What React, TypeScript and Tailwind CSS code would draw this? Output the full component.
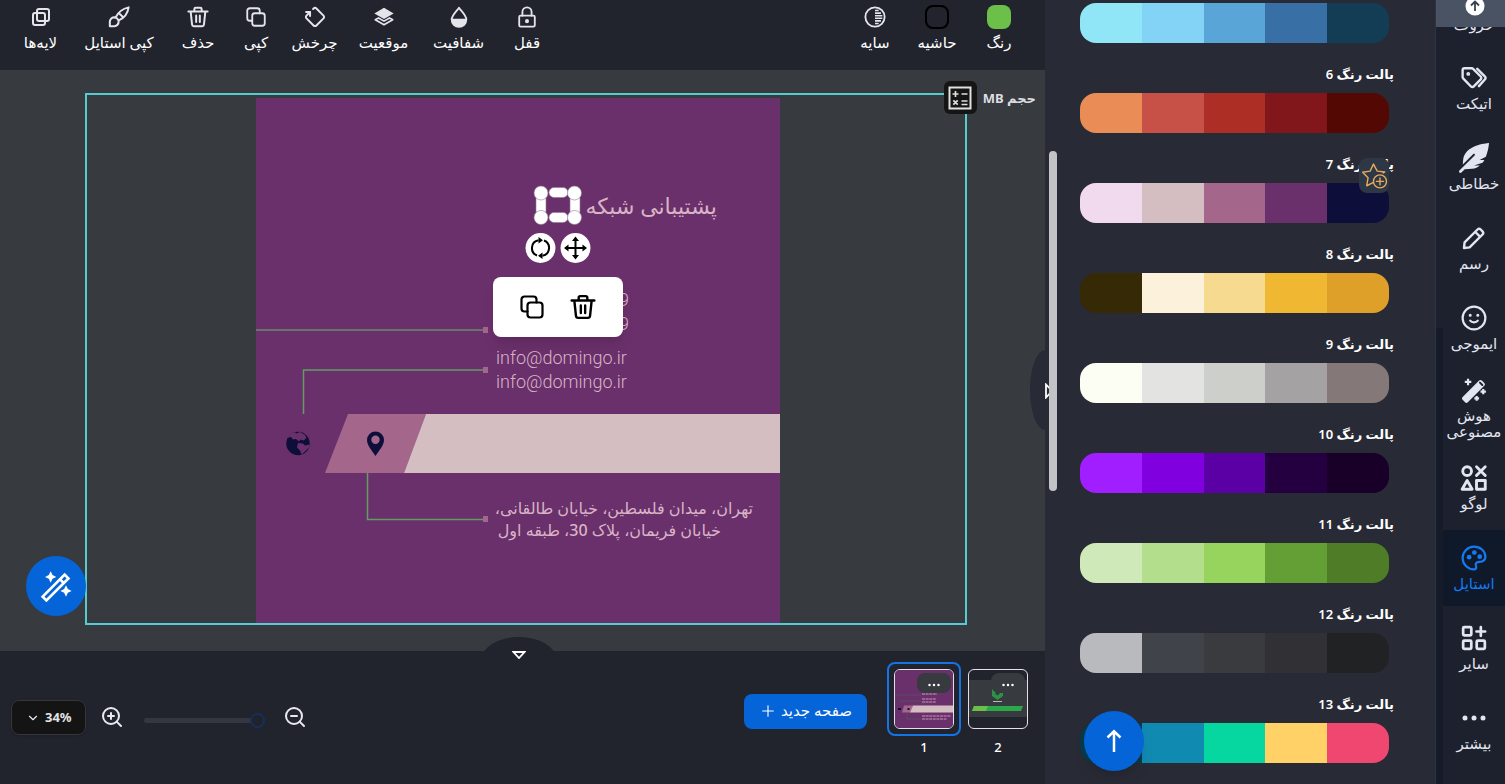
import type { ReactNode } from 'react';
import { ChevronDown, Plus, ZoomIn, ZoomOut } from 'lucide-react';
import { FaFeatherAlt } from 'react-icons/fa';
import { TbIcons, TbLayersIntersect, TbRotateRectangle } from 'react-icons/tb';

interface Tool {
  label: string;
  width: string;
  icon: ReactNode;
}

interface Palette {
  title?: string;
  colors: string[];
  starred?: boolean;
}

interface NavItem {
  label: string;
  icon: ReactNode;
  active?: boolean;
}

interface IconProps {
  className?: string;
}

const stroke = {
  viewBox: '0 0 24 24',
  fill: 'none',
  stroke: 'currentColor',
  strokeWidth: 2,
  strokeLinecap: 'round',
  strokeLinejoin: 'round',
} as const;

function TrashIcon({ className }: IconProps) {
  return (
    <svg {...stroke} strokeWidth="2.200" className={className}>
      <path d="M1.500 6h21M4 6l1.500 14.200a2 2 0 0 0 2 1.800h9a2 2 0 0 0 2-1.800L20 6M8 5.500V3.500a1.500 1.500 0 0 1 1.500-1.500h5a1.500 1.500 0 0 1 1.500 1.500V6M10 10.500v7M14 10.500v7" />
    </svg>
  );
}

function CopyIcon({ className }: IconProps) {
  return (
    <svg {...stroke} strokeWidth="2.200" className={className}>
      <rect x="7.500" y="7.500" width="15" height="15" rx="3" />
      <path d="M7.500 16.500H4.500a3 3 0 0 1-3-3v-9a3 3 0 0 1 3-3h9a3 3 0 0 1 3 3v3" />
    </svg>
  );
}

function BrushIcon({ className }: IconProps) {
  return (
    <svg {...stroke} strokeWidth="2.200" className={className}>
      <path d="M2 22V17.500a4.800 4.800 0 1 1 5 4.500zM8.500 12.200C11 7 16 3 22.500 1.500 21.500 8 17 13.500 11.800 15.700M12.500 8.500l3.500 3.300" />
    </svg>
  );
}

function StackIcon({ className }: IconProps) {
  return (
    <svg viewBox="0 0 24 24" className={className}>
      <path d="M12 2 22.500 8.200 12 14.200 1.500 8.200z" fill="currentColor" />
      <path
        d="M6 13 2.500 15 12 20.500l9.500-5.500L18 13l-6 3.500z"
        fill="none"
        stroke="currentColor"
        strokeWidth="1.800"
        strokeLinejoin="round"
      />
    </svg>
  );
}

function DropIcon({ className }: IconProps) {
  return (
    <svg {...stroke} className={className}>
      <path d="M12 2C8.500 6.500 4 10.500 4 14.800a8 8 0 0 0 16 0C20 10.500 15.500 6.500 12 2z" />
      <path d="M4 14h16c.5 5-3.500 8.800-8 8.800S3.500 19 4 14z" fill="currentColor" stroke="none" />
    </svg>
  );
}

function LockIcon({ className }: IconProps) {
  return (
    <svg {...stroke} className={className}>
      <rect x="3.500" y="10.500" width="17" height="12" rx="1.500" />
      <path d="M7 10.500V6.500a5 5 0 0 1 10 0v4" />
      <circle cx="12" cy="16.500" r="1.200" fill="currentColor" />
    </svg>
  );
}

function ShadowIcon({ className }: IconProps) {
  return (
    <svg {...stroke} strokeLinecap="butt" className={className}>
      <circle cx="12" cy="12" r="10.500" />
      <path d="M12 5h4M12 7.800h6.500M12 10.600h8M12 13.400h8M12 16.200h6.500M12 19h4" strokeWidth="1.700" />
    </svg>
  );
}

function CalculatorIcon({ className }: IconProps) {
  return (
    <svg {...stroke} strokeLinecap="butt" strokeLinejoin="miter" className={className}>
      <rect x="1.500" y="1.500" width="21" height="21" />
      <path d="M4.500 8h6M7.500 5v6M13.500 8h6M5.300 14.300l4.400 4.400M9.700 14.300l-4.400 4.400M13.500 15h6M13.500 18.500h6" strokeWidth="1.700" />
    </svg>
  );
}

function StarPlusIcon({ className }: IconProps) {
  return (
    <svg {...stroke} strokeWidth="1.300" className={className}>
      <path d="M20.500 9.200 22 8.300l-7-.800L11.500 1 8.400 7.500 1.500 8.500l5 5.200L5.300 21l6.200-3.200" />
      <circle cx="17.500" cy="17" r="6" />
      <path d="M17.500 13.800v6.400M14.300 17h6.400" />
    </svg>
  );
}

function TagsIcon({ className }: IconProps) {
  return (
    <svg {...stroke} strokeWidth="2.200" className={className}>
      <path d="M1.500 4.800a1.800 1.800 0 0 1 1.800-1.800h6.500a2 2 0 0 1 1.400.600l7 7a1.800 1.800 0 0 1 0 2.600l-6.400 6.600a1.800 1.800 0 0 1-2.600 0l-7-7.200a2 2 0 0 1-.700-1.400z" />
      <path d="M15 3.500l7.200 7.300a1.600 1.600 0 0 1 0 2.300L16.500 19.500" />
      <circle cx="6.700" cy="8.200" r=".7" fill="currentColor" />
    </svg>
  );
}

function PencilIcon({ className }: IconProps) {
  return (
    <svg {...stroke} strokeWidth="2.400" className={className}>
      <path d="M2 22l.6-5.600L15.500 3.500a2.300 2.300 0 0 1 3.200 0l1.800 1.800a2.300 2.300 0 0 1 0 3.200L7.600 21.400zM13.300 6l4.700 4.700" />
    </svg>
  );
}

function SmileIcon({ className }: IconProps) {
  return (
    <svg {...stroke} className={className}>
      <circle cx="12" cy="12" r="10.500" />
      <path d="M8.500 14.500c1.500 2 5.500 2 7 0" />
      <path d="M8.500 9.500h.01M15.500 9.500h.01" strokeWidth="2.800" />
    </svg>
  );
}

function WandSparkIcon({ className }: IconProps) {
  return (
    <svg {...stroke} className={className}>
      <path d="M2.800 19.800 18 4.600l2.200 2.200L5 22z" strokeWidth="3.600" fill="currentColor" />
      <path d="M17.500 5.200 19.700 7.400" stroke="#1c212d" strokeWidth="1.800" />
      <path d="M6.500 1.500v6M3.500 4.500h6M20.500 11v5M18 13.500h5M14.500 17.500v4.500M12.300 19.700h4.400" strokeLinecap="butt" />
    </svg>
  );
}

function WandIcon({ className }: IconProps) {
  return (
    <svg {...stroke} strokeLinejoin="miter" className={className}>
      <path d="M2 20 18.500 3.500l2.800 2.800L4.800 22.800zM15 7l2.800 2.800" />
      <path
        d="M8 1 9.400 3.800l2.800 1.400-2.800 1.400L8 9.500 6.600 6.600 3.800 5.200 6.600 3.800zM19.500 11.500l1.400 2.800 2.800 1.400-2.800 1.400-1.400 2.900-1.400-2.900-2.800-1.400 2.800-1.400z"
        fill="currentColor"
        stroke="none"
      />
    </svg>
  );
}

function PaletteIcon({ className }: IconProps) {
  return (
    <svg {...stroke} className={className}>
      <path d="M12 1.500a10.500 10.500 0 0 0 0 21c1.500 0 2.300-1 2-2.200-.5-1.700-.9-2.600 0-3.700 1.300-1.700 3.400-.6 5.400-1.400 2-.8 3.100-2.200 3.100-4.200C22.500 5.500 17.800 1.500 12 1.500z" />
      <g fill="currentColor" stroke="none">
        <circle cx="7.500" cy="11.200" r="2.200" />
        <circle cx="12.300" cy="7" r="2.200" />
        <circle cx="17.300" cy="10.800" r="2.200" />
      </g>
    </svg>
  );
}

function AppsPlusIcon({ className }: IconProps) {
  return (
    <svg {...stroke} strokeWidth="2.500" className={className}>
      <rect x="2" y="2" width="7.500" height="7.500" rx="1" />
      <rect x="2" y="14.500" width="7.500" height="7.500" rx="1" />
      <rect x="14.500" y="14.500" width="7.500" height="7.500" rx="1" />
      <path d="M18.300 2v8M14.300 6h8" />
    </svg>
  );
}

function DotsIcon({ className }: IconProps) {
  return (
    <svg viewBox="0 0 24 24" fill="currentColor" className={className}>
      <circle cx="3" cy="12" r="2.500" />
      <circle cx="12" cy="12" r="2.500" />
      <circle cx="21" cy="12" r="2.500" />
    </svg>
  );
}

const leftTools: Tool[] = [
  { label: 'لایه‌ها', width: 'w-[61px]', icon: <TbLayersIntersect className="size-6" /> },
  { label: 'کپی استایل', width: 'w-24', icon: <BrushIcon className="size-[22px]" /> },
  { label: 'حذف', width: 'w-[62px]', icon: <TrashIcon className="size-[22px]" /> },
  { label: 'کپی', width: 'w-[54px]', icon: <CopyIcon className="size-5" /> },
  { label: 'چرخش', width: 'w-[63px]', icon: <TbRotateRectangle className="size-6" /> },
  { label: 'موقعیت', width: 'w-[75px]', icon: <StackIcon className="size-[22px]" /> },
  { label: 'شفافیت', width: 'w-[75px]', icon: <DropIcon className="size-[22px]" /> },
  { label: 'قفل', width: 'w-[62px]', icon: <LockIcon className="size-[22px]" /> },
];

const rightTools: Tool[] = [
  { label: 'سایه', width: 'w-[62px]', icon: <ShadowIcon className="size-[22px]" /> },
  { label: 'حاشیه', width: 'w-[62px]', icon: <span className="size-6 rounded-lg border-2 border-black" /> },
  { label: 'رنگ', width: 'w-[62px]', icon: <span className="size-6 rounded-lg bg-[#6cc04a]" /> },
];

const palettes: Palette[] = [
  { colors: ['#90e5f6', '#83d3f6', '#59a5d8', '#386fa4', '#133c55'] },
  { title: 'پالت رنگ 6', colors: ['#ea8c55', '#c75146', '#ad2e24', '#81171b', '#540804'] },
  { title: 'پالت رنگ 7', colors: ['#f1d9ee', '#d5bec1', '#a4668b', '#6a306b', '#0e0e3a'], starred: true },
  { title: 'پالت رنگ 8', colors: ['#352a05', '#fcf2db', '#f5da90', '#f0b832', '#dfa02a'] },
  { title: 'پالت رنگ 9', colors: ['#fcfdf3', '#e3e4e2', '#cdcfca', '#a4a2a2', '#847879'] },
  { title: 'پالت رنگ 10', colors: ['#a01eff', '#8000e0', '#5a00a4', '#240040', '#180028'] },
  { title: 'پالت رنگ 11', colors: ['#cfe9b9', '#b3df8c', '#97d45e', '#639f35', '#4e7c27'] },
  { title: 'پالت رنگ 12', colors: ['#b9babe', '#41434b', '#393b3e', '#303035', '#212224'] },
  { title: 'پالت رنگ 13', colors: ['#073b4c', '#118ab2', '#06d6a0', '#ffd166', '#ef476f'] },
];

const navItems: NavItem[] = [
  { label: 'اتیکت', icon: <TagsIcon className="size-[26px]" /> },
  { label: 'خطاطی', icon: <FaFeatherAlt className="size-[30px]" /> },
  { label: 'رسم', icon: <PencilIcon className="size-6" /> },
  { label: 'ایموجی', icon: <SmileIcon className="size-[26px]" /> },
  { label: 'هوش مصنوعی', icon: <WandSparkIcon className="size-[26px]" /> },
  { label: 'لوگو', icon: <TbIcons className="size-[30px] stroke-[2.3]" /> },
  { label: 'استایل', icon: <PaletteIcon className="size-[26px]" />, active: true },
  { label: 'سایر', icon: <AppsPlusIcon className="size-[26px]" /> },
  { label: 'بیشتر', icon: <DotsIcon className="size-6" /> },
];

function ToolButton({ tool }: { tool: Tool }) {
  return (
    <button className={`flex flex-col items-center gap-0.5 pt-1 text-[#e4e5ea] ${tool.width}`}>
      <span className="flex h-[26px] items-center">{tool.icon}</span>
      <span dir="rtl" className="whitespace-nowrap text-[15px] font-medium leading-5 text-white">
        {tool.label}
      </span>
    </button>
  );
}

function Toolbar() {
  return (
    <header className="flex h-[70px] shrink-0 items-start justify-between bg-[#21232d] pl-2.5 pr-[15px]">
      <div className="flex">
        {leftTools.map(tool => (
          <ToolButton key={tool.label} tool={tool} />
        ))}
      </div>
      <div className="flex">
        {rightTools.map(tool => (
          <ToolButton key={tool.label} tool={tool} />
        ))}
      </div>
    </header>
  );
}

function CardShapes() {
  return (
    <svg width="524" height="525" viewBox="0 0 524 525" className="absolute left-0 top-0">
      <g fill="none" stroke="#5f9d63" strokeWidth="1.500">
        <path d="M0 232h229" stroke="#67886b" />
        <path d="M229 272H47.500v44" />
        <path d="M111.500 375v46.500H229" />
      </g>
      <g fill="#a4668b">
        <path d="M227 229h5v6h-5zM227 269h5v6h-5zM227 418h5v6h-5z" />
        <path d="M92 316h78l-22 59H69z" />
      </g>
      <path d="M170 316h354v59H148z" fill="#d5bec1" />
      <path
        d="M119.500 358c-4-6-8.500-11-8.500-16a8.500 8.500 0 0 1 17 0c0 5-4.500 10-8.500 16zm0-20.500a4.200 4.200 0 1 0 0 8.400 4.200 4.200 0 0 0 0-8.400z"
        fill="#0e0e3a"
        fillRule="evenodd"
      />
      <circle cx="42" cy="345.500" r="11.700" fill="#0e0e3a" />
      <path
        d="M31 340c2-3 4-5 8-6l1 1.500 4-1.500 5 3 1.500 3-3 2.500-3-1-1.500 2-3-2.500-3 .5-2-2.500zM42 345l5 .5 2 2 4.500-1-.5 3-4 4-3.500 3-1.500-4-3-3z"
        fill="#6a306b"
      />
    </svg>
  );
}

function TransformHandles() {
  return (
    <svg width="68" height="82" viewBox="0 0 68 82" className="absolute left-[268px] top-[86px]">
      <g fill="#fff" stroke="#8f7c93" strokeWidth=".6">
        <rect x="25" y="3.500" width="19" height="10" rx="5" />
        <rect x="25" y="28.500" width="19" height="10" rx="5" />
        <rect x="12" y="11" width="10" height="20" rx="4" />
        <rect x="46" y="11" width="10" height="20" rx="4" />
        <circle cx="17" cy="9" r="7" />
        <circle cx="50.500" cy="9" r="7" />
        <circle cx="17" cy="33.500" r="7" />
        <circle cx="50.500" cy="33.500" r="7" />
      </g>
      <circle cx="16.500" cy="64" r="15" fill="#fff" />
      <circle cx="51.500" cy="64" r="15" fill="#fff" />
      <g fill="none" stroke="#000" strokeWidth="2">
        <path d="M13 71.500a8 8 0 0 1 1.500-15.300M20 56.500a8 8 0 0 1-1.500 15.300" />
        <path d="M43 64h17M51.500 55.500v17" />
      </g>
      <path d="M14.500 53l4.500 3.200-4.500 3.300zM18.500 68.500l-4.500 3.200 4.500 3.300zM51.500 52.500l3.500 4.500h-7zM51.500 75.500l3.500-4.500h-7zM40 64l4.500-3.500v7zM63 64l-4.500-3.500v7z" />
    </svg>
  );
}

function Artboard() {
  return (
    <div className="relative h-full w-[524px] overflow-hidden bg-[#6a306b] text-[#d9b4c6]">
      <CardShapes />
      <p dir="rtl" className="absolute right-[63px] top-[91px] whitespace-nowrap text-[22px] leading-8">
        پشتیبانی شبکه
      </p>
      <p className="absolute left-[363px] top-[190px] font-[Roboto,sans-serif] text-lg font-light leading-6">
        9<br />9
      </p>
      <p className="absolute left-[240px] top-[248px] font-[Roboto,sans-serif] text-lg font-light leading-6">
        info@domingo.ir
        <br />
        info@domingo.ir
      </p>
      <p dir="rtl" className="absolute right-[27px] top-[399px] whitespace-nowrap text-base font-medium leading-[22px]">
        تهران، میدان فلسطین، خیابان طالقانی،
      </p>
      <p dir="rtl" className="absolute right-[59px] top-[421px] whitespace-nowrap text-base font-medium leading-[22px]">
        خیابان فریمان، پلاک 30، طبقه اول
      </p>
      <TransformHandles />
      <div className="absolute left-[237px] top-[179px] flex h-[60px] w-[130px] items-center justify-center gap-[26px] rounded-lg bg-white text-black shadow-lg">
        <button aria-label="کپی">
          <CopyIcon className="size-6" />
        </button>
        <button aria-label="حذف">
          <TrashIcon className="size-[26px]" />
        </button>
      </div>
    </div>
  );
}

function Stage() {
  return (
    <section className="relative min-h-0 flex-1 bg-[#373a3e] pb-[26px] pl-[85px] pr-[78px] pt-[23px]">
      <div className="flex h-full justify-center border-2 border-[#56ccd2] pr-4 pt-[3px]">
        <Artboard />
      </div>

      <div className="absolute right-[9px] top-[11px] flex items-center gap-1.5">
        <button
          aria-label="حجم"
          className="flex size-[33px] items-center justify-center rounded-md bg-[#151515] text-[#e0e0e0]"
        >
          <CalculatorIcon className="size-6" />
        </button>
        <span dir="rtl" className="text-[13px] font-bold leading-5 text-[#dcdde2]">
          حجم MB
        </span>
      </div>

      <button
        aria-label="جادو"
        className="absolute bottom-[35px] left-[26px] flex size-[60px] items-center justify-center rounded-full bg-[#0564d8] text-white"
      >
        <WandIcon className="size-8" />
      </button>

      <button
        aria-label="بستن صفحه‌ها"
        className="absolute -bottom-2 left-1/2 -ml-[41px] flex h-[22px] w-[74px] items-end justify-center bg-[#21232d] text-white [border-radius:50%_50%_0_0/100%_100%_0_0]"
      >
        <svg width="14" height="8" viewBox="0 0 14 8" fill="none" stroke="currentColor" strokeWidth="1.800">
          <path d="M1.500 1h11L7 7z" />
        </svg>
      </button>

      <button
        aria-label="بستن پنل"
        className="absolute right-0 top-[280px] h-20 w-[15px] bg-[#282a35] [border-radius:100%_0_0_100%/50%_0_0_50%]"
      />
    </section>
  );
}

function Thumbnail({ page, selected, children }: { page: number; selected?: boolean; children: ReactNode }) {
  return (
    <div className="flex flex-col items-center gap-px text-[13px] font-medium leading-5 text-white">
      <div className={`rounded-lg border-2 p-[5px] ${selected ? 'border-[#1474e4]' : 'border-transparent'}`}>
        <div className="relative size-[60px] overflow-hidden rounded-md border border-[#e4dfe9]">
          {children}
          <button
            aria-label={`صفحه ${page}`}
            className="absolute right-0.5 top-[3px] flex h-5 w-[34px] items-center justify-center rounded-lg bg-[#373a3e]"
          >
            <DotsIcon className="mt-1 size-3" />
          </button>
        </div>
      </div>
      <span>{page}</span>
    </div>
  );
}

function BottomBar() {
  return (
    <footer className="flex h-[133px] shrink-0 items-center justify-between bg-[#21232d] pl-[11px] pr-2.5">
      <div className="flex items-center text-[#e8e9ee]">
        <div className="relative">
          <select
            aria-label="بزرگنمایی"
            className="h-[35px] w-[75px] appearance-none rounded-lg border border-[#34363d] bg-[#141414] pl-[33px] text-[13px] font-bold text-[#e4e4e4] shadow"
          >
            <option>34%</option>
          </select>
          <ChevronDown className="pointer-events-none absolute left-[15px] top-[11px] size-3.5" />
        </div>
        <button aria-label="بزرگ‌تر" className="mb-0.5 ml-3.5">
          <ZoomIn className="size-6" />
        </button>
        <input
          type="range"
          aria-label="زوم"
          min={0}
          max={100}
          defaultValue={100}
          className="ml-5 mt-[5px] h-4 w-[121px] appearance-none bg-transparent [&::-webkit-slider-runnable-track]:h-[5px] [&::-webkit-slider-runnable-track]:rounded-sm [&::-webkit-slider-runnable-track]:bg-[#343641] [&::-webkit-slider-thumb]:-mt-[5px] [&::-webkit-slider-thumb]:size-[15px] [&::-webkit-slider-thumb]:appearance-none [&::-webkit-slider-thumb]:rounded-full [&::-webkit-slider-thumb]:border-2 [&::-webkit-slider-thumb]:border-[#14305a] [&::-webkit-slider-thumb]:bg-[#20242a]"
        />
        <button aria-label="کوچک‌تر" className="mb-0.5 ml-[18px]">
          <ZoomOut className="size-6" />
        </button>
      </div>

      <div className="flex items-start self-start pt-[11px]">
        <button
          dir="rtl"
          className="mr-5 mt-8 flex h-[35px] w-[123px] items-center justify-center gap-1 whitespace-nowrap rounded-lg bg-[#0564d8] pb-0.5 text-[15px] font-medium text-white"
        >
          صفحه جدید
          <Plus className="size-[18px]" strokeWidth={1.500} />
        </button>
        <Thumbnail page={1} selected>
          <svg viewBox="0 0 58 58" className="size-full bg-[#6a306b]">
            <path d="M9 35.500h9l-3 7H7z" fill="#a4668b" />
            <path d="M18 35.500h40v7H15z" fill="#d5bec1" />
            <path d="M0 25h26M5 31h21M12 43v6h14" stroke="#4f6a5c" strokeWidth=".5" fill="none" />
            <path d="M27 24h15M27 29h14M27 32h14M27 46h29M27 49h25" stroke="#c49ab6" strokeWidth="1" strokeDasharray="3 .6" />
            <path d="M3 39h3M12.500 39h2" stroke="#0e0e3a" strokeWidth="2" />
          </svg>
        </Thumbnail>
        <Thumbnail page={2}>
          <svg viewBox="0 0 58 58" className="size-full">
            <path d="M0 10h58v37H0z" fill="#373a3e" />
            <path d="M5 36h49l-2 5H3z" fill="#2aa84a" />
            <path d="M5 36h14l-2 5H3z" fill="#6cc04a" />
            <path d="M23 18h11v8l-5.500 4-5.500-4z" fill="#2b9344" />
            <path d="M26.500 19h4v5l-2 1.500-2-1.500z" fill="#373a3e" />
            <path d="M24 31.500h9" stroke="#b9babe" strokeWidth="1.200" />
          </svg>
        </Thumbnail>
      </div>
    </footer>
  );
}

function PaletteRow({ palette }: { palette: Palette }) {
  return (
    <li className="relative">
      {palette.title && (
        <h3 dir="rtl" className="-mr-[5px] pb-[9px] pt-[21px] text-[13px] font-semibold leading-5 text-white">
          {palette.title}
        </h3>
      )}
      <button aria-label={palette.title} className="flex h-10 w-full overflow-hidden rounded-2xl">
        {palette.colors.map(color => (
          <span key={color} className="h-full flex-1" style={{ backgroundColor: color }} />
        ))}
      </button>
      {palette.starred && (
        <button
          aria-label="افزودن به علاقه‌مندی‌ها"
          className="absolute right-0 top-[25px] flex h-[35px] w-[30px] items-center justify-center rounded-lg bg-[#2d3745] text-[#e9a95c]"
        >
          <StarPlusIcon className="size-[26px]" />
        </button>
      )}
    </li>
  );
}

function PalettePanel() {
  return (
    <aside className="relative w-[390px] shrink-0 overflow-hidden bg-[#282a35] pl-[35px] pr-[46px] pt-[3px]">
      <ul>
        {palettes.map((palette, i) => (
          <PaletteRow key={i} palette={palette} />
        ))}
      </ul>
      {/* collapse arrow, partly hidden by the scroll thumb */}
      <svg width="10" height="16" viewBox="0 0 10 16" fill="none" stroke="#fff" strokeWidth="1.800" className="absolute left-0 top-[383px]">
        <path d="M1 1.500v13L7 8z" />
      </svg>
      <div className="absolute left-1 top-[151px] h-[340px] w-2 rounded-full bg-[#c1c3c7]" />
      <button
        aria-label="بازگشت به بالا"
        className="absolute bottom-[13px] left-[39px] flex size-[60px] items-center justify-center rounded-full bg-[#0564d8] text-white shadow-lg"
      >
        <svg {...stroke} strokeWidth="2.500" strokeLinecap="butt" strokeLinejoin="miter" className="size-6">
          <path d="M12 23V3M5.500 8.500 12 2.300l6.500 6.200" />
        </svg>
      </button>
    </aside>
  );
}

function Sidebar() {
  return (
    <nav className="relative w-[70px] shrink-0 overflow-hidden border-l border-[#2c3440] bg-[#1c212d] pl-[7px] text-[#e3e6f0]">
      <div className="absolute bottom-0 left-0 top-[328px] w-[7px] bg-[#151b28]" />
      <div className="flex flex-col gap-1">
        <a href="#text" dir="rtl" className="flex h-[46px] items-center justify-center pt-0.5 text-[15px] font-medium leading-4">
          حروف
        </a>
        {navItems.map(item => (
          <a
            key={item.label}
            href="#"
            className={`flex h-[76px] shrink-0 flex-col items-center justify-center gap-1 ${
              item.active ? 'bg-[#0f1929] text-[#127af5]' : ''
            }`}
          >
            <span className="flex h-[26px] items-center">{item.icon}</span>
            <span dir="rtl" className="text-center text-[15px] font-medium leading-4">
              {item.label}
            </span>
          </a>
        ))}
      </div>
      <button
        aria-label="بالا"
        className="absolute inset-x-0 top-0 flex h-[27px] items-start justify-center overflow-hidden bg-[#4a5364] pl-2"
      >
        <svg width="20" height="20" viewBox="0 0 20 20" className="-mt-1">
          <circle cx="10" cy="10" r="9.500" fill="#fff" />
          <path d="M10 15V6M6 9.500l4-4 4 4" fill="none" stroke="#3a4252" strokeWidth="1.800" />
        </svg>
      </button>
    </nav>
  );
}

export default function App() {
  return (
    <div className="flex h-screen overflow-hidden bg-[#282a35] font-['Noto_Sans','DejaVu_Sans',sans-serif]">
      <main className="flex min-w-0 flex-1 flex-col">
        <Toolbar />
        <Stage />
        <BottomBar />
      </main>
      <PalettePanel />
      <Sidebar />
    </div>
  );
}
